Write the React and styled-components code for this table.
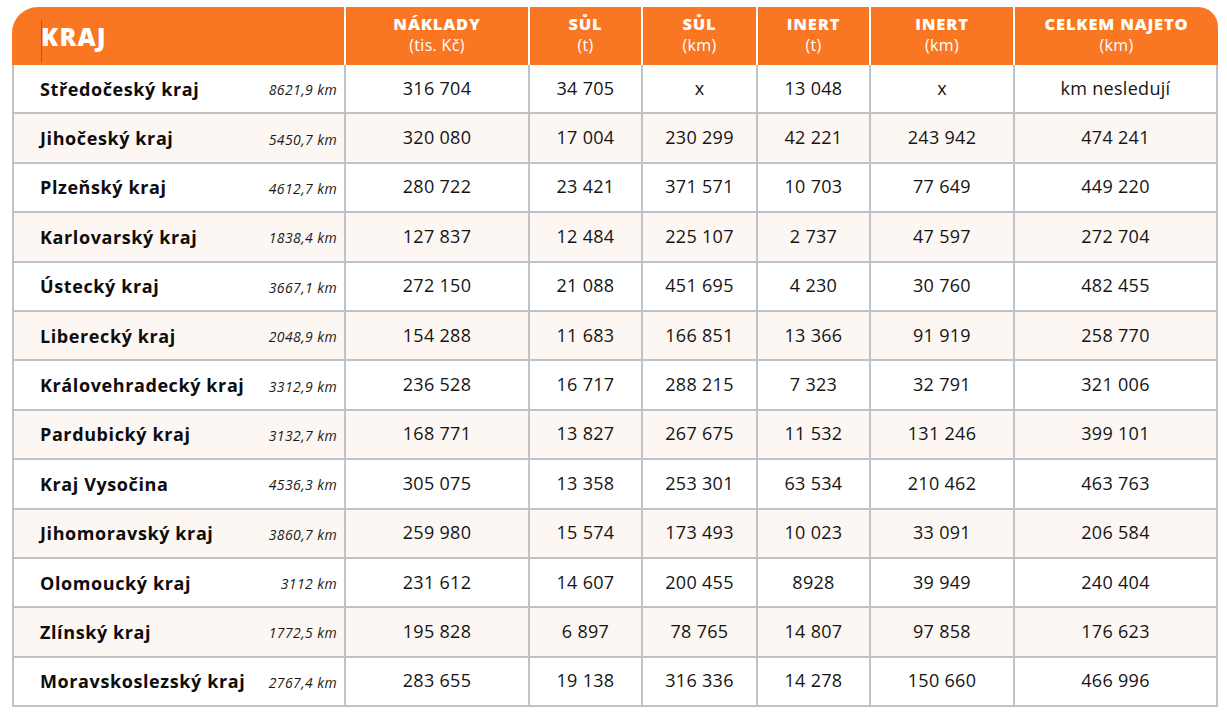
import React from 'react';
import styled, { createGlobalStyle } from 'styled-components';

const GlobalStyle = createGlobalStyle`
  body {
    margin: 0;
    background: #ffffff;
    font-family: "Open Sans", "Noto Sans", sans-serif;
    color: #111111;
  }
`;

const COLS = '334px 184px 113px 115px 113px 144px 203px';

const Page = styled.div`
  padding: 7px 0 0 12px;
`;

const Table = styled.div`
  width: 1206px;
`;

const HeadRow = styled.div`
  display: grid;
  grid-template-columns: ${COLS};
  height: 58px;
  background: #f97623;
  border-radius: 26px 20px 0 0;
  overflow: hidden;
`;

const HeadCell = styled.div`
  display: flex;
  flex-direction: column;
  align-items: ${p => (p.$left ? 'flex-start' : 'center')};
  justify-content: ${p => (p.$left ? 'center' : 'flex-start')};
  padding: ${p => (p.$left ? '0 0 0 29px' : '6px 0 0')};
  border-right: 2px solid #ffffff;
  color: #ffffff;
  position: relative;

  &:last-child {
    border-right: none;
  }
`;

const Cursor = styled.span`
  position: absolute;
  left: 29px;
  top: 13px;
  width: 1px;
  height: 42px;
  background: #6b6b6b;
`;

const KrajTitle = styled.span`
  font-size: 25px;
  font-weight: 800;
  letter-spacing: 1.2px;
`;

const HeadTitle = styled.span`
  font-size: 16.5px;
  font-weight: 800;
  line-height: 21px;
  letter-spacing: 0.8px;
`;

const HeadUnit = styled.span`
  font-size: 16px;
  font-weight: 400;
  line-height: 22px;
  letter-spacing: 0.3px;
`;

const Row = styled.div`
  display: grid;
  grid-template-columns: ${COLS};
  height: 49.4px;
  box-sizing: border-box;
  border-bottom: 2px solid #bfc2c6;
  background: ${p => (p.$alt ? '#fdf7f3' : '#ffffff')};
`;

const Cell = styled.div`
  display: flex;
  align-items: center;
  justify-content: center;
  border-right: 2px solid #bfc2c6;
  font-size: 18px;
  letter-spacing: 0.3px;
  color: #141414;
  padding-bottom: 2px;
`;

const RegionCell = styled.div`
  display: flex;
  align-items: center;
  justify-content: space-between;
  border-left: 2px solid #bfc2c6;
  border-right: 2px solid #bfc2c6;
  padding: 0 7px 0 26px;
`;

const RegionName = styled.span`
  font-size: 18px;
  font-weight: 700;
  letter-spacing: 0.6px;
  color: #0d0d0d;
`;

const RegionKm = styled.span`
  font-size: 14px;
  font-style: italic;
  letter-spacing: 0.4px;
  color: #1a1a1a;
  padding-top: 2px;
`;

const headers = [
  ['NÁKLADY', '(tis. Kč)'],
  ['SŮL', '(t)'],
  ['SŮL', '(km)'],
  ['INERT', '(t)'],
  ['INERT', '(km)'],
  ['CELKEM NAJETO', '(km)'],
];

const rows = [
  ['Středočeský kraj', '8621,9 km', '316 704', '34 705', 'x', '13 048', 'x', 'km nesledují'],
  ['Jihočeský kraj', '5450,7 km', '320 080', '17 004', '230 299', '42 221', '243 942', '474 241'],
  ['Plzeňský kraj', '4612,7 km', '280 722', '23 421', '371 571', '10 703', '77 649', '449 220'],
  ['Karlovarský kraj', '1838,4 km', '127 837', '12 484', '225 107', '2 737', '47 597', '272 704'],
  ['Ústecký kraj', '3667,1 km', '272 150', '21 088', '451 695', '4 230', '30 760', '482 455'],
  ['Liberecký kraj', '2048,9 km', '154 288', '11 683', '166 851', '13 366', '91 919', '258 770'],
  ['Královehradecký kraj', '3312,9 km', '236 528', '16 717', '288 215', '7 323', '32 791', '321 006'],
  ['Pardubický kraj', '3132,7 km', '168 771', '13 827', '267 675', '11 532', '131 246', '399 101'],
  ['Kraj Vysočina', '4536,3 km', '305 075', '13 358', '253 301', '63 534', '210 462', '463 763'],
  ['Jihomoravský kraj', '3860,7 km', '259 980', '15 574', '173 493', '10 023', '33 091', '206 584'],
  ['Olomoucký kraj', '3112 km', '231 612', '14 607', '200 455', '8928', '39 949', '240 404'],
  ['Zlínský kraj', '1772,5 km', '195 828', '6 897', '78 765', '14 807', '97 858', '176 623'],
  ['Moravskoslezský kraj', '2767,4 km', '283 655', '19 138', '316 336', '14 278', '150 660', '466 996'],
];

const App = () => {
  return (
    <>
      <GlobalStyle />
      <Page>
        <Table>
          <HeadRow>
            <HeadCell $left>
              <Cursor />
              <KrajTitle>KRAJ</KrajTitle>
            </HeadCell>
            {headers.map(([title, unit], i) => (
              <HeadCell key={i}>
                <HeadTitle>{title}</HeadTitle>
                <HeadUnit>{unit}</HeadUnit>
              </HeadCell>
            ))}
          </HeadRow>
          {rows.map(([name, km, ...values], i) => (
            <Row key={name} $alt={i % 2 === 1}>
              <RegionCell>
                <RegionName>{name}</RegionName>
                <RegionKm>{km}</RegionKm>
              </RegionCell>
              {values.map((v, j) => (
                <Cell key={j}>{v}</Cell>
              ))}
            </Row>
          ))}
        </Table>
      </Page>
    </>
  );
};

export default App;
